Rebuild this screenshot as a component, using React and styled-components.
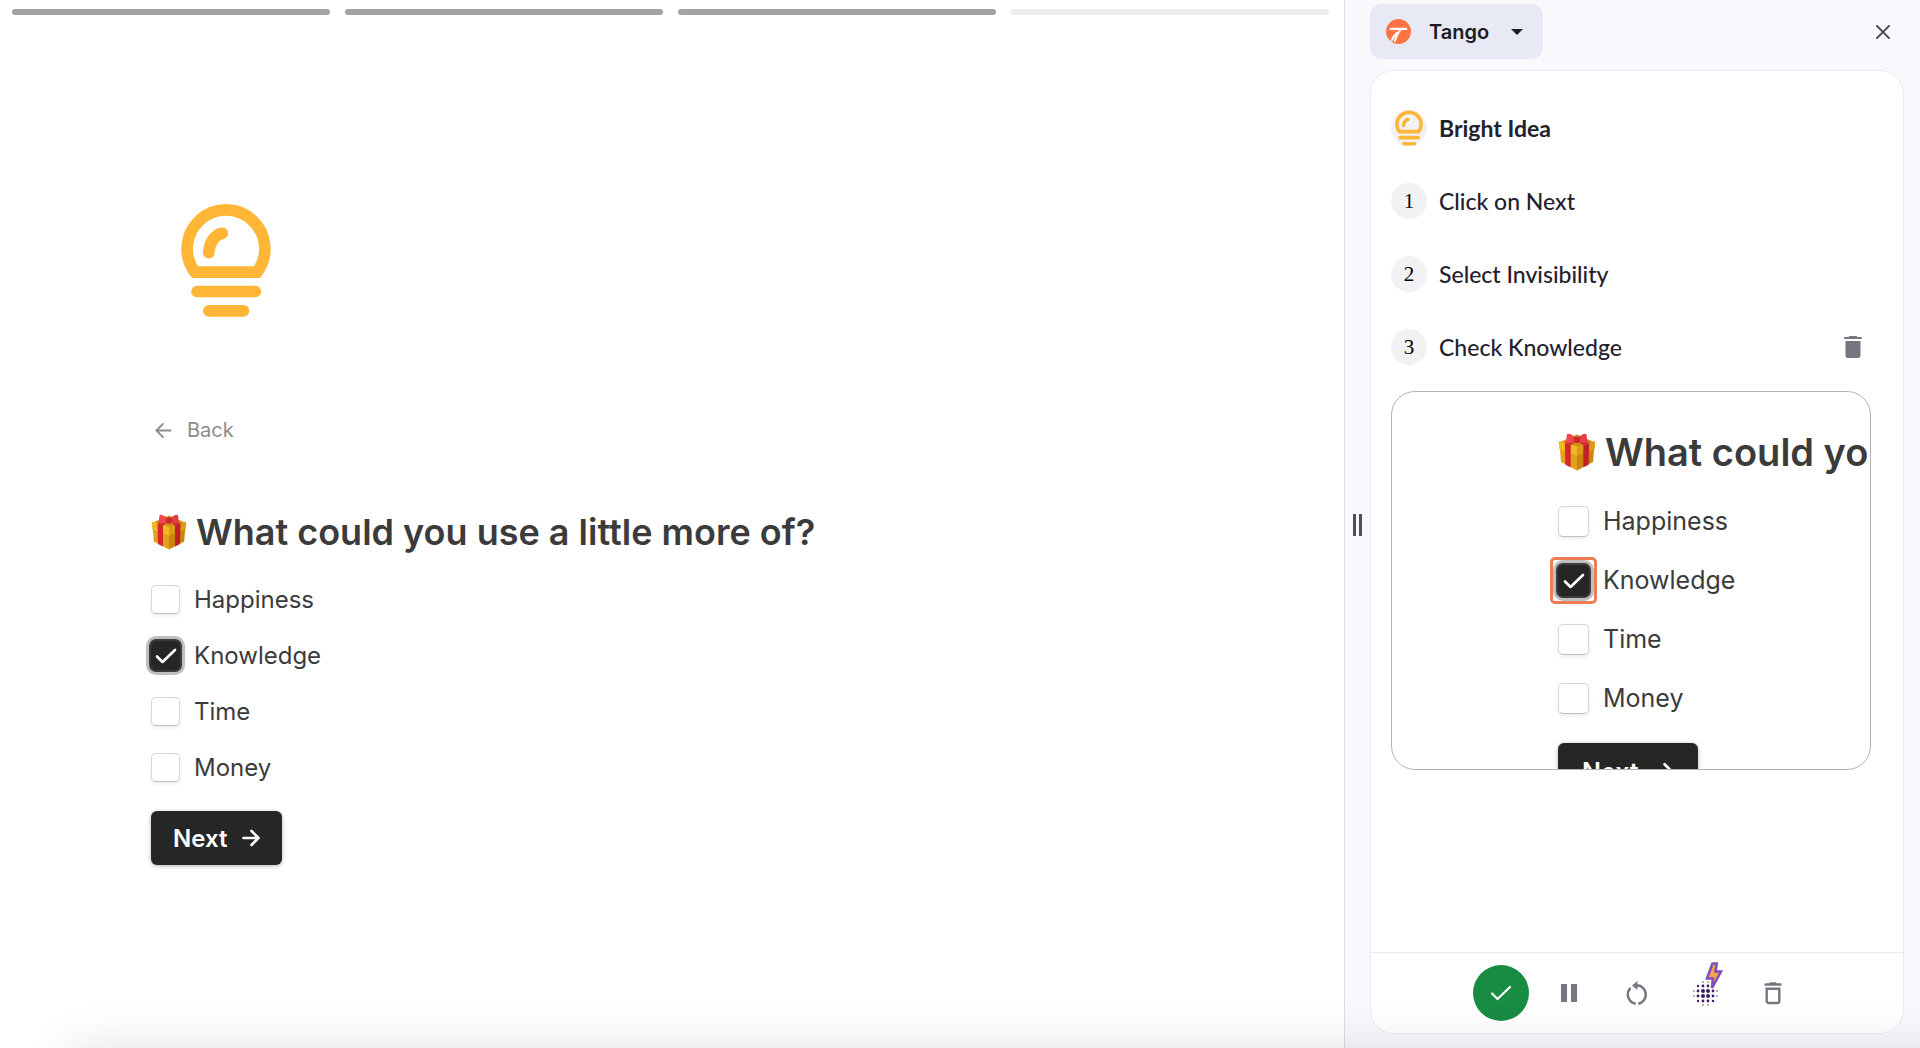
import { useState } from "react";
import styled, { createGlobalStyle, css } from "styled-components";

const ink = { text: "#3b3b3b", dark: "#262626", muted: "#8c8c8c" };
const panel = {
  background: "#f8f8fd",
  border: "#dcdaea",
  text: "#23212e",
  icon: "#78757f",
};
const sans = `Inter, "Liberation Sans", sans-serif`;
const panelSans = `Lato, "Liberation Sans", sans-serif`;

const GlobalStyle = createGlobalStyle`
  * {
    box-sizing: border-box;
  }

  body {
    margin: 0;
    background: #fff;
    font-family: ${sans};
    overflow: hidden;
  }

  button {
    font: inherit;
    border: none;
    padding: 0;
    background: none;
    cursor: pointer;
  }

  svg {
    flex-shrink: 0;
  }
`;

const Page = styled.div`
  display: grid;
  grid-template-columns: 7fr 3fr;
  height: 100vh;
  position: relative;
  overflow: hidden;
`;

const BottomShade = styled.div`
  position: absolute;
  left: 72px;
  right: -60px;
  top: 100%;
  height: 60px;
  box-shadow: 0 0 48px 2px rgba(0, 0, 0, 0.11);
  pointer-events: none;
`;

const FormSide = styled.main`
  min-width: 0;
`;

const Progress = styled.div`
  display: grid;
  grid-template-columns: repeat(4, 1fr);
  gap: 15px;
  padding: 9px 15px 0 12px;
`;

const ProgressBar = styled.div`
  height: 6px;
  border-radius: 3px;
  background: ${(props) => (props.$done ? "#a3a3a3" : "#ededed")};
`;

const FormContent = styled.div`
  padding: 189px 0 0 151px;
`;

const BulbLogo = styled.div`
  height: 113px;
  padding-left: 30px;
`;

const BackButton = styled.button`
  display: flex;
  align-items: center;
  gap: 15px;
  margin: 98px 0 0 4px;
  height: 30px;
  font-size: 20px;
  color: ${ink.muted};
`;

const Question = styled.h1`
  display: flex;
  align-items: center;
  gap: 9px;
  margin: 0;
  white-space: nowrap;
  font-weight: 600;
  color: ${ink.text};
  font-size: ${(props) => (props.$large ? 38 : 36)}px;
  line-height: 44px;
`;

const Options = styled.div`
  display: flex;
  flex-direction: column;
  align-items: flex-start;
  gap: ${(props) => (props.$large ? 28 : 27)}px;
`;

const Option = styled.label`
  display: flex;
  align-items: center;
  gap: 14px;
  color: ${ink.text};
  font-size: ${(props) => (props.$large ? 25 : 24)}px;
  line-height: ${(props) => (props.$large ? 31 : 29)}px;
`;

const CheckWrap = styled.span`
  position: relative;
  display: flex;
  width: ${(props) => (props.$large ? 31 : 29)}px;
  height: ${(props) => (props.$large ? 31 : 29)}px;
  color: #fff;

  svg {
    position: absolute;
    inset: 0;
    margin: auto;
    pointer-events: none;
  }
`;

const Check = styled.input`
  appearance: none;
  margin: 0;
  width: 100%;
  height: 100%;
  border-radius: 5px;
  background: #fff;
  border: 1px solid #d6d6d6;
  border-bottom-color: #bebebe;
  box-shadow: 0 2px 4px rgba(0, 0, 0, 0.08);

  &:checked {
    background: ${ink.dark};
    border-color: ${ink.dark};
    box-shadow: 0 0 0 2px #3c3c3c, 0 0 0 5px #bfbfbf;
  }
`;

const Highlight = styled.span`
  position: absolute;
  inset: -8px;
  border: 3px solid #ee7c55;
  border-radius: 5px;
  pointer-events: none;
`;

const NextButton = styled.button`
  display: flex;
  align-items: center;
  gap: 15px;
  border-radius: 6px;
  background: ${ink.dark};
  color: #fff;
  font-weight: 600;
  box-shadow: 0 1px 4px rgba(0, 0, 0, 0.3);
  height: ${(props) => (props.$large ? 57 : 54)}px;
  padding: 0 ${(props) => (props.$large ? 24 : 22)}px;
  font-size: ${(props) => (props.$large ? 25 : 24)}px;
`;

const MainQuestion = styled.form`
  display: flex;
  flex-direction: column;
  align-items: flex-start;
  margin-top: 65px;

  ${Options} {
    margin: 31px 0 29px;
  }
`;

const Sidebar = styled.aside`
  display: grid;
  grid-template-columns: 25px minmax(0, 1fr);
  min-width: 0;
  min-height: 0;
  padding: 0 16px 14px 0;
  background: ${panel.background};
  border-left: 1px solid ${panel.border};
  font-family: ${panelSans};
  color: ${panel.text};
`;

const ResizeHandle = styled.div`
  align-self: center;
  justify-self: center;
  width: 9px;
  height: 22px;
  margin-top: 16px;
  border: solid #4f4f55;
  border-width: 0 3px;
`;

const SidebarBody = styled.div`
  display: flex;
  flex-direction: column;
  min-height: 0;
`;

const SidebarHeader = styled.header`
  display: flex;
  align-items: center;
  justify-content: space-between;
  padding: 4px 14px 0 0;
`;

const WorkspaceButton = styled.button`
  display: flex;
  align-items: center;
  gap: 18px;
  height: 55px;
  padding: 0 20px 0 16px;
  border-radius: 12px;
  background: #e7e9f4;
  font-family: ${sans};
  font-size: 20px;
  font-weight: 600;
  color: #1c1b24;

  svg:last-child {
    margin-left: 4px;
  }
`;

const CloseButton = styled.button`
  display: flex;
`;

const Card = styled.section`
  flex: 1;
  display: flex;
  flex-direction: column;
  min-height: 0;
  margin-top: 11px;
  border: 1px solid #eaeaf2;
  border-radius: 24px;
  background: #fff;
`;

const Steps = styled.div`
  flex: 1;
  min-height: 0;
  padding: 39px 32px 0 20px;
`;

const Step = styled.div`
  display: flex;
  align-items: center;
  gap: 12px;
  height: 36px;
  margin-bottom: 37px;
  font-size: 23px;
  font-weight: ${(props) => (props.$title ? 700 : 500)};
`;

const StepBadge = styled.span`
  display: flex;
  align-items: center;
  justify-content: center;
  width: 36px;
  height: 36px;
  border-radius: 50%;
  background: #f2f2f4;
  color: #000;
  font-family: "Liberation Serif", serif;
  font-size: 21px;
`;

const StepDelete = styled.button`
  display: flex;
  margin: 0 9px 0 auto;
`;

const Screenshot = styled.div`
  height: 379px;
  margin-top: -11px;
  padding: 38px 0 0 166px;
  overflow: hidden;
  border: 1px solid #b4b4b6;
  border-radius: 24px;
  font-family: ${sans};

  ${Options} {
    margin: 32px 0 29px;
  }
`;

const Toolbar = styled.footer`
  display: flex;
  justify-content: center;
  gap: 12px;
  padding: 12px 0;
  border-top: 1px solid #ebebef;
`;

const ToolButton = styled.button`
  position: relative;
  display: flex;
  align-items: center;
  justify-content: center;
  width: 56px;
  height: 56px;
  border-radius: 50%;
  color: ${panel.icon};

  ${(props) =>
    props.$primary &&
    css`
      background: #198c44;
      color: #fff;
    `}
`;

const BoltBadge = styled.svg`
  position: absolute;
  left: 28px;
  top: -3px;
`;

function Bulb({ width, height }) {
  return (
    <svg
      width={width}
      height={height}
      viewBox="153 71 269 339"
      fill="none"
      stroke="#ffb637"
      strokeWidth="35"
      strokeLinecap="round"
    >
      <path d="M194.5 275.5A116.5 116.5 0 1 1 380.5 275.5Z" />
      <path d="M276.5 159C254 161 236 190 236 217M200.5 333.5H375.5M236 391.5H340" />
    </svg>
  );
}

function Gift({ size }) {
  return (
    <svg width={size} height={size} viewBox="0 0 36 36">
      <path d="M1 9 18 1.5 35 9 18 17Z" fill="#cf9012" />
      <path d="M1.8 14 18 21V35.5L2.8 27.5Z" fill="#e3a01c" />
      <path d="M34.2 14 18 21V35.5L33.2 27.5Z" fill="#c9860f" />
      <path d="M.7 7.5 18 12.5V21.5L1.3 15.5Z" fill="#f5b625" />
      <path d="M35.3 7.5 18 12.5V21.5L34.7 15.5Z" fill="#dc9a17" />
      <path d="m6.5 9.5 5.5 2V32.5L7 30Z" fill="#d8252b" />
      <path d="m29.5 9.5-5.5 2V32.5L29 30Z" fill="#c01f26" />
      <path
        d="m6.5 9.5 10-5 4 .5-8.5 6.8ZM29.5 9.5l-10-5-4 .5 8.5 6.8Z"
        fill="#d92b31"
      />
      <path
        d="M17 4.5C13 1 9 0 8.5 1.5 8 4 8 7 7.5 8.5c2 1.5 7 1 10.5-1.5Z"
        fill="#ee4a4d"
      />
      <path
        d="M19 4.5C23 1 26 0 27 1.5c.5 2.5.5 5.5 1 7-2 1.5-7 1-10.5-1.5Z"
        fill="#e33c42"
      />
      <rect x="15" y="3.5" width="6" height="6" rx="2" fill="#c9272f" />
    </svg>
  );
}

function Arrow({ back, size, strokeWidth }) {
  return (
    <svg
      width={size}
      height={size}
      viewBox="0 0 18 18"
      fill="none"
      stroke="currentColor"
      strokeWidth={strokeWidth}
      strokeLinecap="round"
      strokeLinejoin="round"
    >
      <path
        d={back ? "M16.5 9H1.5M8.5 2 1.5 9l7 7" : "M1.5 9h15M9.5 2l7 7-7 7"}
      />
    </svg>
  );
}

function Tick({ strokeWidth }) {
  return (
    <svg
      width="22"
      height="16"
      viewBox="0 0 22 16"
      fill="none"
      stroke="currentColor"
      strokeWidth={strokeWidth}
      strokeLinecap="round"
      strokeLinejoin="round"
    >
      <path d="M2 8.5 7.5 14 20 2" />
    </svg>
  );
}

// rows of halftone dots: [y, [[x, radius], ...]]
const DOT_ROWS = [
  [1, [[10, 0.7], [15, 0.7]]],
  [5, [[5, 1.2], [10, 1.4], [15, 1.4], [20, 1.2]]],
  [10, [[1, 0.7], [5, 1.4], [10, 2], [15, 2], [20, 1.4], [24, 0.7]]],
  [15, [[1, 0.7], [5, 1.4], [10, 2], [15, 2], [20, 1.4], [24, 0.7]]],
  [20, [[5, 1.2], [10, 1.4], [15, 1.4], [20, 1.2]]],
  [24, [[10, 0.7], [15, 0.7]]],
];

function BlurDots() {
  return (
    <svg width="25" height="25" viewBox="0 0 25 25" fill="#3b1d5e">
      {DOT_ROWS.map(([y, dots]) =>
        dots.map(([x, r]) => <circle key={`${x}-${y}`} cx={x} cy={y} r={r} />)
      )}
    </svg>
  );
}

const OPTIONS = ["Happiness", "Knowledge", "Time", "Money"];

function OptionList({ large, selected, highlighted, onToggle }) {
  return (
    <Options $large={large}>
      {OPTIONS.map((name) => (
        <Option key={name} $large={large}>
          <CheckWrap $large={large}>
            <Check
              type="checkbox"
              checked={selected.includes(name)}
              onChange={() => onToggle(name)}
            />
            {selected.includes(name) && <Tick strokeWidth="2.6" />}
            {highlighted === name && <Highlight />}
          </CheckWrap>
          {name}
        </Option>
      ))}
    </Options>
  );
}

function QuestionTitle({ large }) {
  return (
    <Question $large={large} as={large ? "h3" : "h1"}>
      <Gift size={large ? 38 : 36} />
      What could you use a little more of?
    </Question>
  );
}

export default function App() {
  const [selected, setSelected] = useState(["Knowledge"]);

  const toggle = (name) => {
    setSelected((prev) =>
      prev.includes(name) ? prev.filter((n) => n !== name) : [...prev, name]
    );
  };

  return (
    <Page>
      <GlobalStyle />
      <FormSide>
        <Progress>
          <ProgressBar $done />
          <ProgressBar $done />
          <ProgressBar $done />
          <ProgressBar />
        </Progress>
        <FormContent>
          <BulbLogo>
            <Bulb width={90} height={113} />
          </BulbLogo>
          <BackButton type="button">
            <Arrow back size={17} strokeWidth="2" />
            Back
          </BackButton>
          <MainQuestion>
            <QuestionTitle />
            <OptionList selected={selected} onToggle={toggle} />
            <NextButton type="button">
              Next
              <Arrow size={18} strokeWidth="2.6" />
            </NextButton>
          </MainQuestion>
        </FormContent>
      </FormSide>

      <Sidebar>
        <ResizeHandle />
        <SidebarBody>
          <SidebarHeader>
            <WorkspaceButton type="button">
              <svg width="25" height="25" viewBox="0 0 24 24">
                <circle cx="12" cy="12" r="12" fill="#ff7442" />
                <path
                  d="M4.5 9.5H19.5M14.5 9.5Q11 13 8.5 21M10.5 13.5Q7.5 16 5.5 20.5"
                  fill="none"
                  stroke="#fff"
                  strokeWidth="2"
                  strokeLinecap="round"
                />
              </svg>
              Tango
              <svg width="12" height="6" viewBox="0 0 12 6">
                <path d="M0 0h12L6 6Z" fill="#1c1b24" />
              </svg>
            </WorkspaceButton>
            <CloseButton type="button" aria-label="Close">
              <svg width="14" height="14" viewBox="0 0 15 15">
                <path
                  d="m1 1 13 13M14 1 1 14"
                  stroke="#45444b"
                  strokeWidth="2"
                  strokeLinecap="round"
                />
              </svg>
            </CloseButton>
          </SidebarHeader>
          <Card>
            <Steps>
              <Step $title>
                <StepBadge>
                  <Bulb width={28} height={36} />
                </StepBadge>
                Bright Idea
              </Step>
              <Step>
                <StepBadge>1</StepBadge>
                Click on Next
              </Step>
              <Step>
                <StepBadge>2</StepBadge>
                Select Invisibility
              </Step>
              <Step>
                <StepBadge>3</StepBadge>
                Check Knowledge
                <StepDelete type="button" aria-label="Delete step">
                  <svg
                    width="18"
                    height="22"
                    viewBox="0 0 18 22"
                    fill={panel.icon}
                  >
                    <path d="M5.5 0h7l1 1H17a1 1 0 0 1 0 2H1a1 1 0 0 1 0-2h3.5ZM1.5 5h15v14.5a2.5 2.5 0 0 1-2.5 2.5H4a2.5 2.5 0 0 1-2.5-2.5Z" />
                  </svg>
                </StepDelete>
              </Step>
              <Screenshot inert>
                <QuestionTitle large />
                <OptionList
                  large
                  selected={["Knowledge"]}
                  highlighted="Knowledge"
                  onToggle={() => {}}
                />
                <NextButton type="button" $large>
                  Next
                  <Arrow size={20} strokeWidth="2.4" />
                </NextButton>
              </Screenshot>
            </Steps>
            <Toolbar>
              <ToolButton type="button" $primary aria-label="Finish">
                <Tick strokeWidth="2.2" />
              </ToolButton>
              <ToolButton type="button" aria-label="Pause">
                <svg
                  width="16"
                  height="18"
                  viewBox="0 0 16 18"
                  fill="currentColor"
                >
                  <path d="M0 0h6v18H0zM10 0h6v18h-6z" />
                </svg>
              </ToolButton>
              <ToolButton type="button" aria-label="Restart">
                <svg width="22" height="24" viewBox="0 0 22 24" fill="none">
                  <path
                    d="M9.7 22.7A9.3 9.3 0 0 1 4.5 7M12.3 22.7A9.3 9.3 0 0 0 11 4.3H9"
                    stroke="currentColor"
                    strokeWidth="2.5"
                  />
                  <path d="M11.5 0v9L6 4.5Z" fill="currentColor" />
                </svg>
              </ToolButton>
              <ToolButton type="button" aria-label="Blur">
                <BlurDots />
                <BoltBadge width="18" height="28" viewBox="0 0 18 28">
                  <path
                    d="M7.5 1.5h4.2L10.5 9.5h5.5L7 26l.8-9.5H2Z"
                    fill="#f9a545"
                    stroke="#7f4fbf"
                    strokeWidth="2.6"
                  />
                </BoltBadge>
              </ToolButton>
              <ToolButton type="button" aria-label="Delete">
                <svg width="18" height="23" viewBox="0 0 18 23" fill="none">
                  <path
                    d="M1.5 2.5h15M6.5 1.5h5M2.7 6.7h12.6v12.3a2 2 0 0 1-2 2H4.7a2 2 0 0 1-2-2Z"
                    stroke="currentColor"
                    strokeWidth="2.4"
                    strokeLinecap="round"
                  />
                </svg>
              </ToolButton>
            </Toolbar>
          </Card>
        </SidebarBody>
      </Sidebar>
      <BottomShade />
    </Page>
  );
}
